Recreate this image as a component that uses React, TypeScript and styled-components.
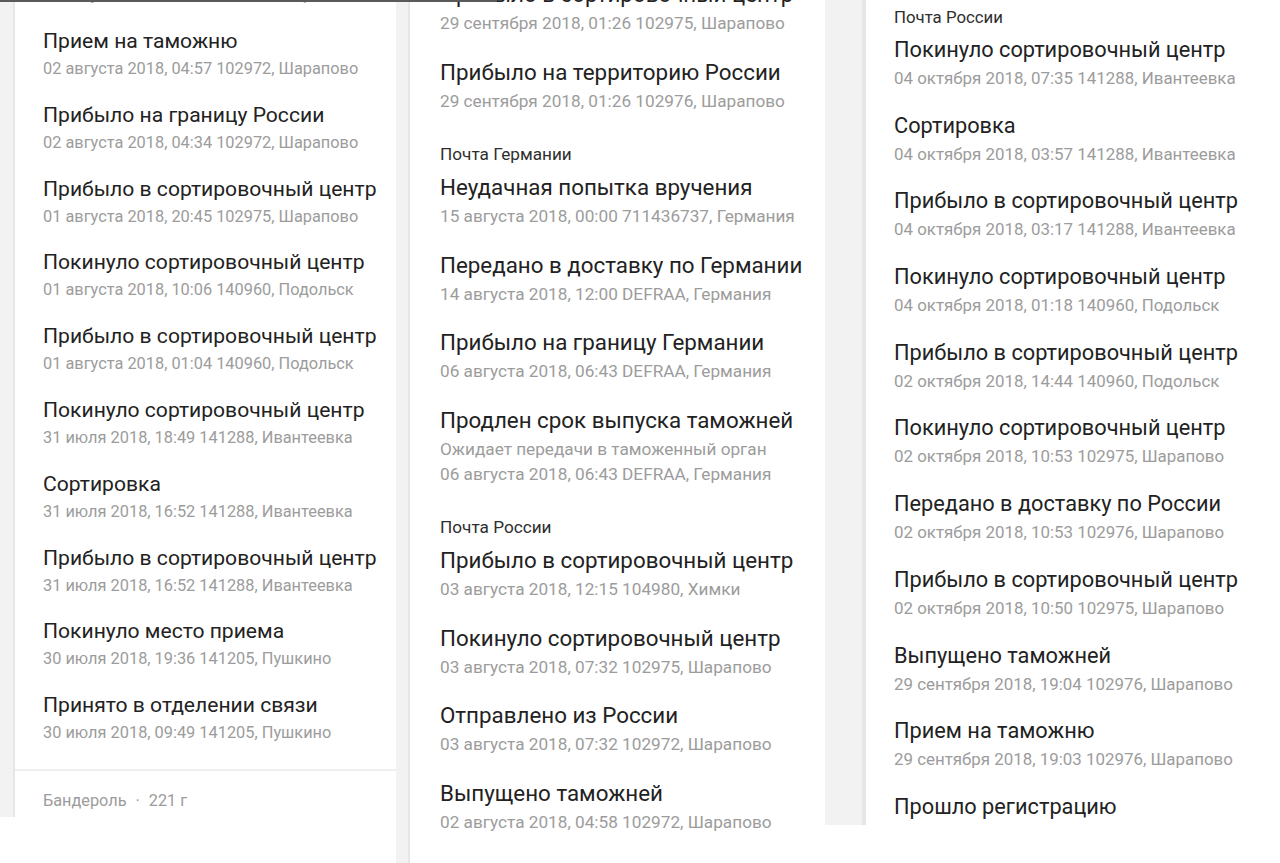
import React from "react";
import styled, { createGlobalStyle } from "styled-components";

const Global = createGlobalStyle`
  html, body { margin: 0; padding: 0; background: #ffffff; }
  body { font-family: Roboto, "Noto Sans", Arial, sans-serif; }
  * { box-sizing: border-box; }
`;

type Entry =
  | { kind: "header"; text: string }
  | { kind: "item"; title: string; lines: string[] };

type Metrics = {
  titleSize: number;
  titleLh: number;
  dateSize: number;
  dateLh: number;
  itemGap: number;
  headerSize: number;
  headerTop: number;
  headerBottom: number;
};

const Page = styled.div`
  position: relative;
  width: 1280px;
  height: 863px;
  overflow: hidden;
  display: flex;
  align-items: flex-start;
  background: #ffffff;
`;

const TopEdge = styled.div`
  position: absolute;
  left: 0;
  top: 0;
  width: 497px;
  height: 2px;
  background: #5a5a5a;
`;

const Shot = styled.div<{ $w: number; $h: number; $gutter: number }>`
  flex: none;
  width: ${(p) => p.$w}px;
  height: ${(p) => p.$h}px;
  padding-left: ${(p) => p.$gutter}px;
  background: #f2f2f2;
  display: flex;
  overflow: hidden;
`;

const Card = styled.div<{ $edge: number; $pad: number }>`
  flex: 1;
  min-width: 0;
  background: #ffffff;
  border-left: ${(p) => p.$edge}px solid #e6e6e6;
  padding-left: ${(p) => p.$pad}px;
  overflow: hidden;
`;

const Scroll = styled.div<{ $offset: number }>`
  display: flex;
  flex-direction: column;
  margin-top: ${(p) => p.$offset}px;
`;

const Item = styled.div<{ $m: Metrics }>`
  display: flex;
  flex-direction: column;
  margin-bottom: ${(p) => p.$m.itemGap}px;
  flex: none;
`;

const Title = styled.div<{ $m: Metrics }>`
  font-size: ${(p) => p.$m.titleSize}px;
  line-height: ${(p) => p.$m.titleLh}px;
  color: #222222;
  white-space: nowrap;
`;

const Meta = styled.div<{ $m: Metrics }>`
  font-size: ${(p) => p.$m.dateSize}px;
  line-height: ${(p) => p.$m.dateLh}px;
  color: #9c9c9c;
  white-space: nowrap;
`;

const Carrier = styled.div<{ $m: Metrics }>`
  font-size: ${(p) => p.$m.headerSize}px;
  line-height: 22px;
  color: #2e2e2e;
  margin-top: ${(p) => p.$m.headerTop}px;
  margin-bottom: ${(p) => p.$m.headerBottom}px;
  white-space: nowrap;
  flex: none;
`;

const Divider = styled.div`
  flex: none;
  height: 2px;
  background: #efefef;
  margin-left: -28px;
  margin-top: 5px;
`;

const Footer = styled.div`
  flex: none;
  font-size: 16.3px;
  line-height: 20px;
  color: #9c9c9c;
  padding-top: 20px;
  white-space: nowrap;
`;

const Dot = styled.span`
  margin: 0 9px;
`;

const List: React.FC<{ entries: Entry[]; m: Metrics }> = ({ entries, m }) => (
  <>
    {entries.map((e, i) =>
      e.kind === "header" ? (
        <Carrier key={i} $m={m}>
          {e.text}
        </Carrier>
      ) : (
        <Item key={i} $m={m}>
          <Title $m={m}>{e.title}</Title>
          {e.lines.map((l, j) => (
            <Meta key={j} $m={m}>
              {l}
            </Meta>
          ))}
        </Item>
      )
    )}
  </>
);

const it = (title: string, ...lines: string[]): Entry => ({ kind: "item", title, lines });
const hd = (text: string): Entry => ({ kind: "header", text });

const m1: Metrics = {
  titleSize: 21.1,
  titleLh: 30,
  dateSize: 16.35,
  dateLh: 26,
  itemGap: 17.8,
  headerSize: 16,
  headerTop: 10,
  headerBottom: 5,
};

const m2: Metrics = {
  titleSize: 22.35,
  titleLh: 34,
  dateSize: 17.2,
  dateLh: 25,
  itemGap: 18.7,
  headerSize: 17.2,
  headerTop: 10.3,
  headerBottom: 5,
};

const m3: Metrics = {
  titleSize: 21.75,
  titleLh: 32,
  dateSize: 16.9,
  dateLh: 25,
  itemGap: 18.7,
  headerSize: 16.8,
  headerTop: 0,
  headerBottom: 6,
};

const col1: Entry[] = [
  it("Выпущено таможней", "02 августа 2018, 04:58 102972, Шарапово"),
  it("Прием на таможню", "02 августа 2018, 04:57 102972, Шарапово"),
  it("Прибыло на границу России", "02 августа 2018, 04:34 102972, Шарапово"),
  it("Прибыло в сортировочный центр", "01 августа 2018, 20:45 102975, Шарапово"),
  it("Покинуло сортировочный центр", "01 августа 2018, 10:06 140960, Подольск"),
  it("Прибыло в сортировочный центр", "01 августа 2018, 01:04 140960, Подольск"),
  it("Покинуло сортировочный центр", "31 июля 2018, 18:49 141288, Ивантеевка"),
  it("Сортировка", "31 июля 2018, 16:52 141288, Ивантеевка"),
  it("Прибыло в сортировочный центр", "31 июля 2018, 16:52 141288, Ивантеевка"),
  it("Покинуло место приема", "30 июля 2018, 19:36 141205, Пушкино"),
  it("Принято в отделении связи", "30 июля 2018, 09:49 141205, Пушкино"),
];

const col2: Entry[] = [
  it("Прибыло в сортировочный центр", "29 сентября 2018, 01:26 102975, Шарапово"),
  it("Прибыло на территорию России", "29 сентября 2018, 01:26 102976, Шарапово"),
  hd("Почта Германии"),
  it("Неудачная попытка вручения", "15 августа 2018, 00:00 711436737, Германия"),
  it("Передано в доставку по Германии", "14 августа 2018, 12:00 DEFRAA, Германия"),
  it("Прибыло на границу Германии", "06 августа 2018, 06:43 DEFRAA, Германия"),
  it(
    "Продлен срок выпуска таможней",
    "Ожидает передачи в таможенный орган",
    "06 августа 2018, 06:43 DEFRAA, Германия"
  ),
  hd("Почта России"),
  it("Прибыло в сортировочный центр", "03 августа 2018, 12:15 104980, Химки"),
  it("Покинуло сортировочный центр", "03 августа 2018, 07:32 102975, Шарапово"),
  it("Отправлено из России", "03 августа 2018, 07:32 102972, Шарапово"),
  it("Выпущено таможней", "02 августа 2018, 04:58 102972, Шарапово"),
  it("Прием на таможню", "02 августа 2018, 04:57 102972, Шарапово"),
];

const col3: Entry[] = [
  hd("Почта России"),
  it("Покинуло сортировочный центр", "04 октября 2018, 07:35 141288, Ивантеевка"),
  it("Сортировка", "04 октября 2018, 03:57 141288, Ивантеевка"),
  it("Прибыло в сортировочный центр", "04 октября 2018, 03:17 141288, Ивантеевка"),
  it("Покинуло сортировочный центр", "04 октября 2018, 01:18 140960, Подольск"),
  it("Прибыло в сортировочный центр", "02 октября 2018, 14:44 140960, Подольск"),
  it("Покинуло сортировочный центр", "02 октября 2018, 10:53 102975, Шарапово"),
  it("Передано в доставку по России", "02 октября 2018, 10:53 102976, Шарапово"),
  it("Прибыло в сортировочный центр", "02 октября 2018, 10:50 102975, Шарапово"),
  it("Выпущено таможней", "29 сентября 2018, 19:04 102976, Шарапово"),
  it("Прием на таможню", "29 сентября 2018, 19:03 102976, Шарапово"),
  it("Прошло регистрацию", "29 сентября 2018, 19:02 102976, Шарапово"),
];

export default function App() {
  return (
    <Page>
      <Global />
      <Shot $w={396} $h={817} $gutter={13}>
        <Card $edge={2} $pad={28}>
          <Scroll $offset={-47.8}>
            <List entries={col1} m={m1} />
            <Divider />
            <Footer>
              Бандероль<Dot>·</Dot>221 г
            </Footer>
          </Scroll>
        </Card>
      </Shot>
      <Shot $w={429} $h={863} $gutter={12}>
        <Card $edge={2} $pad={30}>
          <Scroll $offset={-22.7}>
            <List entries={col2} m={m2} />
          </Scroll>
        </Card>
      </Shot>
      <Shot $w={455} $h={825} $gutter={37}>
        <Card $edge={4} $pad={28}>
          <Scroll $offset={6}>
            <List entries={col3} m={m3} />
          </Scroll>
        </Card>
      </Shot>
      <TopEdge />
    </Page>
  );
}
